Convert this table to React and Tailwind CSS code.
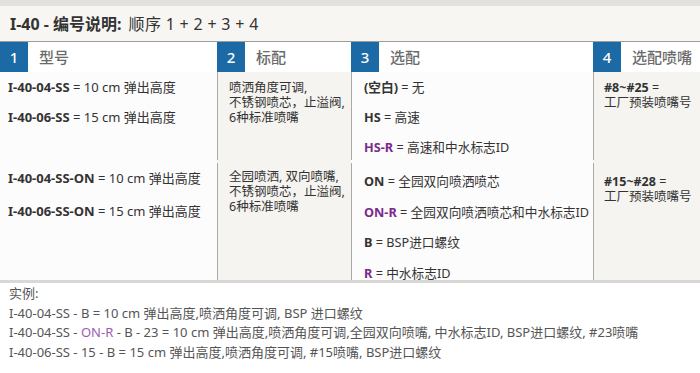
import React from "react";

const FONT = { fontFamily: '"Noto Sans", "Noto Sans CJK SC", sans-serif' };

const Purple = ({ children }) => <span className="font-bold text-[#7a2a8c]">{children}</span>;
const B = ({ children }) => <span className="font-bold text-[#333]">{children}</span>;

const headers = [
  { n: "1", label: "型号" },
  { n: "2", label: "标配" },
  { n: "3", label: "选配" },
  { n: "4", label: "选配喷嘴" },
];

const App = () => {
  return (
    <div className="w-[700px] h-[373px] bg-white text-[#333] overflow-hidden" style={FONT}>
      <div className="h-[6px] bg-[#e2e1de]" />
      <div className="h-[36px] bg-[#f7f6f2] border-b border-[#9c9c9a] flex items-center px-[10px] text-[16px] text-[#333]">
        <span className="font-bold">I-40 - 编号说明:</span>
        <span className="ml-[7px] tracking-[0.3px]">顺序 1 + 2 + 3 + 4</span>
      </div>

      <div className="grid grid-cols-[217px_134px_242px_107px] h-[30px] bg-white">
        {headers.map((h, i) => (
          <div key={h.n} className={`flex ${i === 3 ? "" : "pr-[1px]"}`}>
            <div className="w-[28px] bg-[#1b6aa5] text-white text-[15px] font-medium flex items-center justify-center">
              {h.n}
            </div>
            <div className="flex items-center pl-[11px] text-[15px] font-medium text-[#6a6a6a]">{h.label}</div>
          </div>
        ))}
      </div>

      <div className="grid grid-cols-[217px_134px_242px_107px] text-[13px] leading-[15px]">
        {/* row 1 */}
        <div className="bg-[#fdfcfc] h-[88px] pt-[8px] pl-[8px] flex flex-col gap-[15px] whitespace-nowrap">
          <div><B>I-40-04-SS</B> = 10 cm 弹出高度</div>
          <div><B>I-40-06-SS</B> = 15 cm 弹出高度</div>
        </div>
        <div className="bg-[#f5f4f0] h-[88px] border-l border-[#a9a9a7] pt-[8px] pl-[11px] whitespace-nowrap text-[12.5px]">
          <div>喷洒角度可调,</div>
          <div>不锈钢喷芯，止溢阀,</div>
          <div>6种标准喷嘴</div>
        </div>
        <div className="bg-[#fdfcfc] h-[88px] border-l border-[#a9a9a7] pt-[8px] pl-[12px] flex flex-col gap-[15px] whitespace-nowrap text-[12.7px]">
          <div><B>(空白)</B> = 无</div>
          <div><B>HS</B> = 高速</div>
          <div><Purple>HS-R</Purple> = 高速和中水标志ID</div>
        </div>
        <div className="bg-[#f5f4f0] h-[88px] border-l border-[#a9a9a7] pt-[8px] pl-[10px] whitespace-nowrap text-[12.5px]">
          <div><B>#8~#25</B> =</div>
          <div>工厂预装喷嘴号</div>
        </div>

        {/* row 2 */}
        <div className="bg-[#fdfcfc] h-[120px] pt-[11px] pl-[8px] flex flex-col gap-[18px] whitespace-nowrap">
          <div><B>I-40-04-SS-ON</B> = 10 cm 弹出高度</div>
          <div><B>I-40-06-SS-ON</B> = 15 cm 弹出高度</div>
        </div>
        <div className="bg-[#f5f4f0] h-[120px] pt-[3px]">
          <div className="h-full border-l border-[#a9a9a7] pt-[6px] pl-[11px] whitespace-nowrap text-[12.5px]">
            <div>全园喷洒, 双向喷嘴,</div>
            <div>不锈钢喷芯，止溢阀,</div>
            <div>6种标准喷嘴</div>
          </div>
        </div>
        <div className="bg-[#fdfcfc] h-[120px] pt-[3px]">
          <div className="h-full border-l border-[#a9a9a7] pt-[11px] pl-[12px] flex flex-col gap-[15.5px] whitespace-nowrap text-[12.7px]">
            <div><B>ON</B> = 全园双向喷洒喷芯</div>
            <div><Purple>ON-R</Purple> = 全园双向喷洒喷芯和中水标志ID</div>
            <div><B>B</B> = BSP进口螺纹</div>
            <div><Purple>R</Purple> = 中水标志ID</div>
          </div>
        </div>
        <div className="bg-[#f5f4f0] h-[120px] pt-[3px]">
          <div className="h-full border-l border-[#a9a9a7] pt-[11px] pl-[10px] whitespace-nowrap text-[12.5px]">
            <div><B>#15~#28</B> =</div>
            <div>工厂预装喷嘴号</div>
          </div>
        </div>
      </div>

      <div className="h-[3px] bg-[#d8d8d4]" />

      <div className="pl-[9px] pt-[1px] text-[13px] leading-[19.5px] text-[#555] whitespace-nowrap">
        <div>实例:</div>
        <div>I-40-04-SS - B = 10 cm 弹出高度,喷洒角度可调, BSP 进口螺纹</div>
        <div>
          I-40-04-SS - <span className="text-[#9b5cb4]">ON-R</span> - B - 23 = 10 cm 弹出高度,喷洒角度可调,全园双向喷嘴, 中水标志ID, BSP进口螺纹, #23喷嘴
        </div>
        <div>I-40-06-SS - 15 - B = 15 cm 弹出高度,喷洒角度可调, #15喷嘴, BSP进口螺纹</div>
      </div>
    </div>
  );
};

export default App;
